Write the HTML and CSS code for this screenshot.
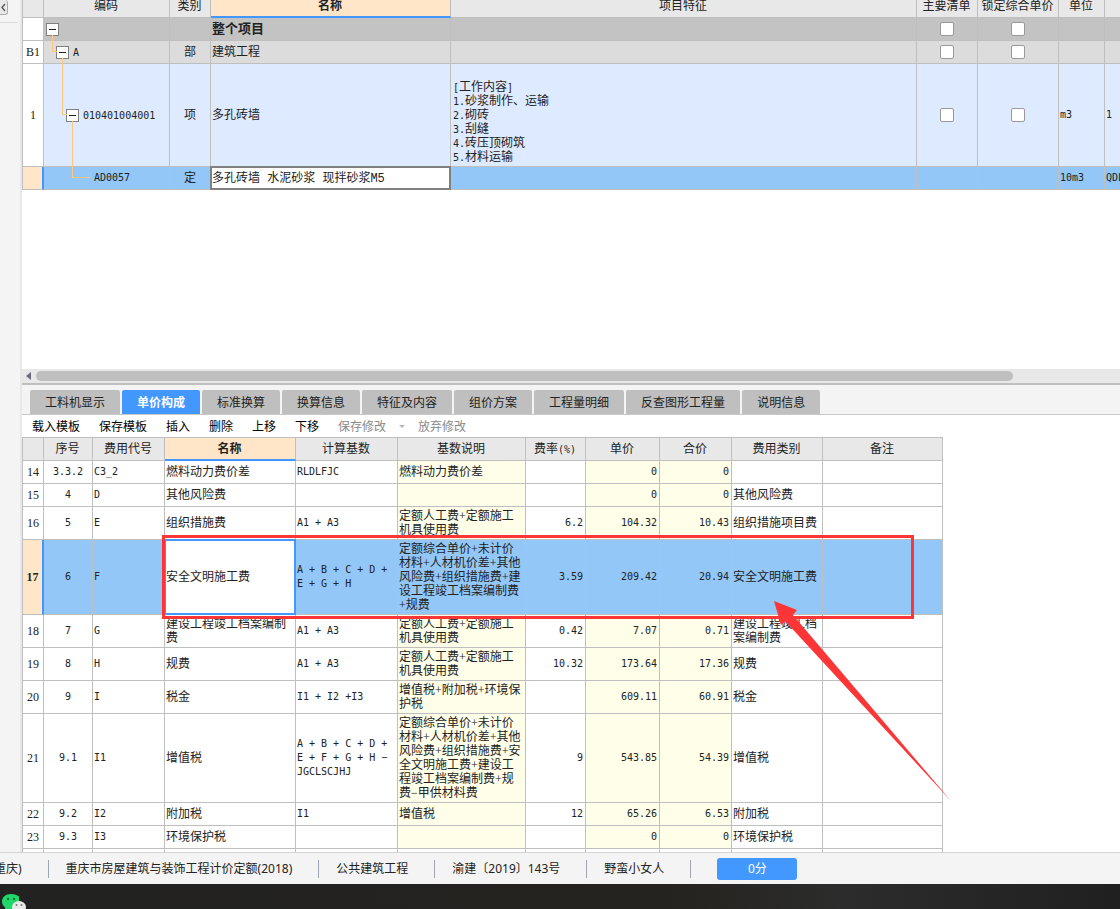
FILE: index.html
```html
<!DOCTYPE html>
<html lang="zh-CN">
<head>
<meta charset="utf-8">
<title>单价构成</title>
<link rel="stylesheet" href="styles.css">
</head>
<body>
<div class="app">
  <div class="workspace">
    <aside class="rail">
      <button class="rail-toggle" type="button" aria-label="收起"><svg width="8" height="15" viewBox="0 0 8 15"><path d="M5 4 2 7.500 5 11" fill="none" stroke="#555" stroke-width="1.300"/></svg></button>
    </aside>
    <main class="main">
      <section class="upper">
        <table class="grid items">
          <colgroup><col class="w21"><col class="w126"><col class="w41"><col class="w240"><col><col class="w61"><col class="w81"><col class="w46"><col class="w15"></colgroup>
          <thead>
            <tr><th></th><th>编码</th><th>类别</th><th class="current">名称</th><th>项目特征</th><th>主要清单</th><th>锁定综合单价</th><th>单位</th><th></th></tr>
          </thead>
          <tbody>
            <tr class="root">
              <td class="no"></td>
              <td class="tree"><button class="fold" type="button" aria-label="折叠"></button></td>
              <td></td><td><b>整个项目</b></td><td></td>
              <td class="mid"><input type="checkbox" aria-label="主要清单"></td>
              <td class="mid"><input type="checkbox" aria-label="锁定综合单价"></td>
              <td></td><td></td>
            </tr>
            <tr class="part">
              <td class="no">B1</td>
              <td class="tree level1"><button class="fold" type="button" aria-label="折叠"></button><span class="mono">A</span></td>
              <td class="mid">部</td><td>建筑工程</td><td></td>
              <td class="mid"><input type="checkbox" aria-label="主要清单"></td>
              <td class="mid"><input type="checkbox" aria-label="锁定综合单价"></td>
              <td></td><td></td>
            </tr>
            <tr class="item">
              <td class="no">1</td>
              <td class="tree level2"><button class="fold" type="button" aria-label="折叠"></button><span class="mono">010401004001</span></td>
              <td class="mid">项</td><td>多孔砖墙</td>
              <td class="feature"><span class="mono">[</span>工作内容<span class="mono">]</span><br><span class="mono">1.</span>砂浆制作、运输<br><span class="mono">2.</span>砌砖<br><span class="mono">3.</span>刮缝<br><span class="mono">4.</span>砖压顶砌筑<br><span class="mono">5.</span>材料运输</td>
              <td class="mid"><input type="checkbox" aria-label="主要清单"></td>
              <td class="mid"><input type="checkbox" aria-label="锁定综合单价"></td>
              <td class="mono">m3</td><td class="mono">1</td>
            </tr>
            <tr class="selected">
              <td class="no"></td>
              <td class="tree level3"><span class="mono">AD0057</span></td>
              <td class="mid">定</td>
              <td class="edit"><input class="cell-input" type="text" aria-label="名称" value="多孔砖墙 水泥砂浆 现拌砂浆M5"></td>
              <td></td><td></td><td></td><td class="mono">10m3</td><td class="mono">QDL</td>
            </tr>
          </tbody>
        </table>
      </section>
      <div class="scrollbar"><svg width="6" height="8" viewBox="0 0 6 8"><path d="M5 0v8L0 4z" fill="#6b6b75"/></svg><div class="thumb"></div></div>

      <section class="lower">
        <nav class="tabs">
          <button type="button">工料机显示</button><button type="button" class="on">单价构成</button><button type="button">标准换算</button><button type="button">换算信息</button><button type="button">特征及内容</button><button type="button">组价方案</button><button type="button">工程量明细</button><button type="button">反查图形工程量</button><button type="button">说明信息</button>
        </nav>
        <div class="tools">
          <button type="button">载入模板</button><button type="button">保存模板</button><button type="button">插入</button><button type="button">删除</button><button type="button">上移</button><button type="button">下移</button>
          <span class="split"><button type="button" disabled>保存修改</button><svg width="6" height="3" viewBox="0 0 6 3"><path d="M0 0h6L3 3z" fill="#b5b5b5"/></svg><button type="button" disabled>放弃修改</button></span>
        </div>
        <table class="grid costs">
          <colgroup><col class="w21"><col class="w49"><col class="w72"><col class="w131"><col class="w102"><col class="w128"><col class="w60"><col class="w74"><col class="w72"><col class="w91"><col class="w120"></colgroup>
          <thead>
            <tr><th></th><th>序号</th><th>费用代号</th><th class="current">名称</th><th>计算基数</th><th>基数说明</th><th>费率<span class="mono">(%)</span></th><th>单价</th><th>合价</th><th>费用类别</th><th>备注</th></tr>
          </thead>
          <tbody>
            <tr class="h23"><td class="no">14</td><td class="mid mono">3.3.2</td><td class="mono">C3_2</td><td>燃料动力费价差</td><td class="mono">RLDLFJC</td><td class="calc">燃料动力费价差</td><td class="num"></td><td class="num calc">0</td><td class="num calc">0</td><td></td><td></td></tr>
            <tr class="h23"><td class="no">15</td><td class="mid mono">4</td><td class="mono">D</td><td>其他风险费</td><td></td><td class="calc"></td><td class="num"></td><td class="num calc">0</td><td class="num calc">0</td><td>其他风险费</td><td></td></tr>
            <tr class="h33"><td class="no">16</td><td class="mid mono">5</td><td class="mono">E</td><td>组织措施费</td><td class="mono">A1 + A3</td><td class="calc">定额人工费+定额施工<br>机具使用费</td><td class="num">6.2</td><td class="num calc">104.32</td><td class="num calc">10.43</td><td>组织措施项目费</td><td></td></tr>
            <tr class="h75 selected"><td class="no"><b>17</b></td><td class="mid mono">6</td><td class="mono">F</td><td class="edit"><input class="cell-input active" type="text" aria-label="名称" value="安全文明施工费"></td><td class="mono">A + B + C + D +<br>E + G + H</td><td>定额综合单价+未计价<br>材料+人材机价差+其他<br>风险费+组织措施费+建<br>设工程竣工档案编制费<br>+规费</td><td class="num">3.59</td><td class="num">209.42</td><td class="num">20.94</td><td>安全文明施工费</td><td></td></tr>
            <tr class="h33"><td class="no">18</td><td class="mid mono">7</td><td class="mono">G</td><td>建设工程竣工档案编制<br>费</td><td class="mono">A1 + A3</td><td class="calc">定额人工费+定额施工<br>机具使用费</td><td class="num">0.42</td><td class="num calc">7.07</td><td class="num calc">0.71</td><td>建设工程竣工档<br>案编制费</td><td></td></tr>
            <tr class="h33"><td class="no">19</td><td class="mid mono">8</td><td class="mono">H</td><td>规费</td><td class="mono">A1 + A3</td><td class="calc">定额人工费+定额施工<br>机具使用费</td><td class="num">10.32</td><td class="num calc">173.64</td><td class="num calc">17.36</td><td>规费</td><td></td></tr>
            <tr class="h33"><td class="no">20</td><td class="mid mono">9</td><td class="mono">I</td><td>税金</td><td class="mono">I1 + I2 +I3</td><td class="calc">增值税+附加税+环境保<br>护税</td><td class="num"></td><td class="num calc">609.11</td><td class="num calc">60.91</td><td>税金</td><td></td></tr>
            <tr class="h89"><td class="no">21</td><td class="mid mono">9.1</td><td class="mono">I1</td><td>增值税</td><td class="mono">A + B + C + D +<br>E + F + G + H −<br>JGCLSCJHJ</td><td class="calc">定额综合单价+未计价<br>材料+人材机价差+其他<br>风险费+组织措施费+安<br>全文明施工费+建设工<br>程竣工档案编制费+规<br>费−甲供材料费</td><td class="num">9</td><td class="num calc">543.85</td><td class="num calc">54.39</td><td>增值税</td><td></td></tr>
            <tr class="h23"><td class="no">22</td><td class="mid mono">9.2</td><td class="mono">I2</td><td>附加税</td><td class="mono">I1</td><td class="calc">增值税</td><td class="num">12</td><td class="num calc">65.26</td><td class="num calc">6.53</td><td>附加税</td><td></td></tr>
            <tr class="h23"><td class="no">23</td><td class="mid mono">9.3</td><td class="mono">I3</td><td>环境保护税</td><td></td><td class="calc"></td><td class="num"></td><td class="num calc">0</td><td class="num calc">0</td><td>环境保护税</td><td></td></tr>
            <tr class="cut"><td></td><td></td><td></td><td></td><td></td><td></td><td></td><td></td><td></td><td></td><td></td></tr>
          </tbody>
        </table>
        <svg class="marks" width="930" height="467" viewBox="22 385 930 467" aria-hidden="true">
          <rect x="163.500" y="536.500" width="749" height="81" fill="none" stroke="#fc3636" stroke-width="3"/>
          <path d="M774 601 797 610 793 615 951.500 801.500 785.500 621.500 781 625z" fill="#fc3636"/>
        </svg>
      </section>
    </main>
  </div>

  <footer class="status">
    <span class="first">重庆)</span><span>重庆市房屋建筑与装饰工程计价定额(2018)</span><span>公共建筑工程</span><span>渝建〔2019〕143号</span><span>野蛮小女人</span>
    <button type="button">0分</button>
  </footer>
  <div class="taskbar">
    <svg width="28" height="17" viewBox="0 0 28 17" role="img" aria-label="微信">
      <path d="M11 2C5.500 2 2 5.400 2 9.500c0 2.600 1.300 4.600 3.200 6L5 18h14V4.500C17 3 14.500 2 11 2z" fill="#1ed96a"/>
      <circle cx="8" cy="7" r="1.200" fill="#0a6b33"/><circle cx="14" cy="7" r="1.200" fill="#0a6b33"/>
      <ellipse cx="19" cy="15" rx="7" ry="6" fill="#e9e9e9"/>
      <circle cx="16.500" cy="13" r="1" fill="#777"/><circle cx="21.500" cy="13" r="1" fill="#777"/>
    </svg>
  </div>
</div>
</body>
</html>
```
FILE: styles.css
```css
* { box-sizing: border-box; }
body {
  margin: 0;
  font: 12px/14px "Liberation Serif", "Noto Sans CJK SC", sans-serif;
  color: #222;
  background: #fff;
}
button {
  font: inherit;
  color: inherit;
  border: 0;
  padding: 0;
  background: none;
  white-space: nowrap;
}
.app { height: 100vh; display: flex; flex-direction: column; overflow: hidden; }
.workspace { flex: 1; min-height: 0; display: flex; }
.rail {
  flex: none;
  width: 22px;
  background: linear-gradient(#ddd, #ddd) 0 22px / 18px 1px no-repeat #f4f4f4;
  border-right: 2px solid #e8e8e8;
}
.rail-toggle {
  display: block;
  width: 8px;
  height: 15px;
  border: 1px solid #aaa;
  border-left: 0;
  border-top: 0;
  border-radius: 0 3px 3px 0;
  background: #e9e9e9;
}
.rail-toggle svg { display: block; }
.main { flex: 1; min-width: 0; display: flex; flex-direction: column; }
.upper { flex: 1; min-height: 0; overflow: hidden; }

/* grids */
.grid {
  table-layout: fixed;
  border-collapse: separate;
  border-spacing: 0;
  border-left: 1px solid #bfbfbf;
}
.grid th, .grid td {
  height: 23px;
  padding: 0 2px 0 1px;
  border: solid #bfbfbf;
  border-width: 0 1px 1px 0;
  white-space: nowrap;
  overflow: hidden;
  text-align: left;
}
.grid th { background: #e8e8e8; font-weight: normal; text-align: center; }
.grid th.current {
  background: #ffe6c8;
  font-weight: bold;
  border-bottom: 2px solid #4398ff;
}
.items { width: 100%; margin-top: -5px; }
.items th:last-child, .items td:last-child { border-right: 0; }
.costs { width: 921px; border-top: 1px solid #bfbfbf; }
.grid td.mid, .grid td.no { text-align: center; padding: 0; }
.grid td.no { background: #fff; }
.grid .mono, .grid td.num { font-family: "DejaVu Sans Mono", monospace; font-size: 10px; }
.grid td.num { text-align: right; }
.grid td.calc { background: #ffffe9; }
.root td { background: #c3c3c3; }
.part td { background: #dcdcdc; }
.item td { background: #deeaff; }
.selected td { background: #92c7f7; }
.grid .selected td.no { background: #ffe6c8; border-right: 2px solid #4398ff; }
.grid td.feature { padding: 13px 2px 0; }
.feature .mono { line-height: 1; }
.grid .h33 td { height: 33px; }
.grid .h75 td { height: 75px; }
.grid .h89 td { height: 89px; }
.grid .item td { height: 103px; }
.grid .cut td { height: 3px; border-bottom: 0; }
.grid b { font-size: 13px; }
.grid td.no b { font-size: 12px; }

.w15 { width: 15px; } .w21 { width: 21px; } .w41 { width: 41px; }
.w46 { width: 46px; } .w49 { width: 49px; } .w60 { width: 60px; }
.w61 { width: 61px; } .w72 { width: 72px; } .w74 { width: 74px; }
.w81 { width: 81px; } .w91 { width: 91px; } .w102 { width: 102px; }
.w120 { width: 120px; } .w126 { width: 126px; } .w128 { width: 128px; }
.w131 { width: 131px; } .w240 { width: 240px; }

/* tree column */
.grid td.tree { position: relative; overflow: visible; padding-left: 2px; }
.grid td.level1 { padding-left: 12px; }
.grid td.level2 { padding-left: 22px; }
.grid td.level3 { padding-left: 50px; }
.tree::before {
  content: none;
  position: absolute;
  top: -6px;
  bottom: 50%;
  width: 4px;
  border: solid #ffc680;
  border-width: 0 0 1px 1px;
}
.level1::before { content: ""; left: 8px; }
.level2::before { content: ""; left: 18px; }
.level3::before { content: ""; left: 28px; top: -46px; width: 17px; }
.fold {
  width: 13px;
  height: 13px;
  border: 1px solid #808080;
  background: linear-gradient(#222, #222) center / 7px 1px no-repeat #fff;
  vertical-align: middle;
}
.tree .mono { vertical-align: middle; margin-left: 4px; }
.level3 .mono { margin-left: 0; }

input[type="checkbox"] {
  appearance: none;
  display: block;
  width: 14px;
  height: 14px;
  margin: 0 auto;
  border: 1px solid #999;
  border-radius: 2px;
  background: #fff;
}
.grid td.edit { position: relative; overflow: visible; }
.cell-input {
  position: absolute;
  top: -1px;
  left: -1px;
  width: calc(100% + 2px);
  height: calc(100% + 2px);
  padding: 0 0 2px;
  border: 2px solid #808080;
  border-radius: 0;
  background: #fff;
  color: inherit;
  font: 12px "Liberation Mono", "Noto Sans CJK SC", monospace;
  outline: 0;
}
.cell-input.active { border-color: #4398ff; }

.scrollbar {
  flex: none;
  display: flex;
  align-items: center;
  gap: 4px;
  height: 16px;
  padding: 0 107px 0 4px;
  background: #e8e8e8;
  border-bottom: 2px solid #bfbfbf;
}
.thumb { flex: 1; height: 10px; border-radius: 5px; background: #bfbfbf; }

/* lower pane */
.lower { flex: none; position: relative; }
.tabs {
  display: flex;
  gap: 2px;
  padding: 5px 8px 0;
  background: #f4f4f4;
  border-bottom: 1px solid #c8c8c8;
  font-family: "Noto Sans CJK SC", sans-serif;
}
.tabs button {
  height: 24px;
  padding: 0 15px;
  background: #bfbfbf;
  border-radius: 2px 2px 0 0;
}
.tabs .on { background: #4398ff; color: #fff; font-weight: bold; }
.tools { display: flex; gap: 19px; height: 22px; padding: 1px 10px 0; color: #000; }
.tools button:disabled { color: #8a8a8a; }
.split { display: flex; align-items: center; gap: 13px; }
.marks { position: absolute; top: 0; left: 0; pointer-events: none; }

.status {
  flex: none;
  display: flex;
  align-items: center;
  height: 32px;
  border-top: 1px solid #d4d4d4;
  background: #f4f4f4;
  font-family: "Noto Sans", "Noto Sans CJK SC", sans-serif;
  white-space: nowrap;
}
.status span {
  padding: 2px 26px 2px 17px;
  border-right: 1px solid #a0a6b4;
  height: 18px;
}
.status .first { margin-left: -6px; padding-left: 0; }
.status button {
  width: 80px;
  height: 22px;
  margin-left: 26px;
  border-radius: 3px;
  background: #4398ff;
  color: #fff;
}
.taskbar {
  flex: none;
  display: flex;
  align-items: flex-end;
  height: 25px;
  background: linear-gradient(90deg, #222, #24231f 60%, #2c2c2c 75%, #202020);
}
```
